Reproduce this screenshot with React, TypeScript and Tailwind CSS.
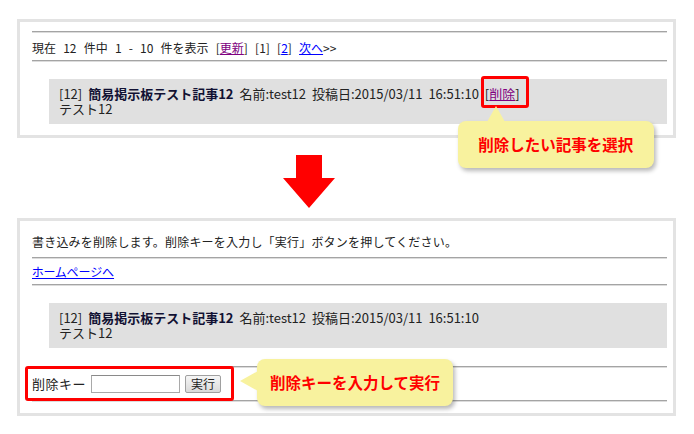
import React from 'react';

const Rule = () => (
  <div className="border-t border-b border-t-[#a4a4a4] border-b-[#dcdcdc]" />
);

const Callout = ({
  children,
  className,
  pointer,
}: {
  children: React.ReactNode;
  className?: string;
  pointer: 'up' | 'left';
}) => (
  <div className={className}>
    <div className="relative w-[196px] h-[47px] rounded-[8px] bg-[#f8f29e] shadow-[2px_3px_4px_rgba(0,0,0,0.28)] flex items-center justify-center">
      {pointer === 'up' ? (
        <svg className="absolute left-[28px] -top-[15px]" width="20" height="16" viewBox="0 0 20 16">
          <polygon points="10,0 19,16 1,16" fill="#f8f29e" />
        </svg>
      ) : (
        <svg className="absolute -left-[17px] top-[11px]" width="18" height="22" viewBox="0 0 18 22">
          <polygon points="0,11 18,1 18,21" fill="#f8f29e" />
        </svg>
      )}
      <span className="relative text-[15.5px] leading-none font-bold text-[#ff0000] whitespace-nowrap">{children}</span>
    </div>
  </div>
);

const PostBox = ({ withDelete }: { withDelete?: boolean }) => (
  <div className="ml-[17px] bg-[#e0e0e0] pl-[10px] pt-[7px] pb-[8px] text-[13px] leading-[15px] text-[#222] [word-spacing:3px]">
    <div className="whitespace-nowrap">
      [12] <span className="font-bold text-[#111133]">簡易掲示板テスト記事12</span> 名前:test12 投稿日:2015/03/11 16:51:10
      {withDelete && (
        <>
          {' '}
          <span className="relative">
            [<a href="#" className="text-[#800080] underline">削除</a>]
            <span className="absolute -left-[4px] -right-[9px] -top-[8px] -bottom-[5px] border-[3px] border-[#ff0000] rounded-[3px]" />
            <Callout className="absolute left-[-27px] top-[37px] [word-spacing:0]" pointer="up">
              削除したい記事を選択
            </Callout>
          </span>
        </>
      )}
    </div>
    <div>テスト12</div>
  </div>
);

export default function App() {
  return (
    <div className="relative w-[694px] h-[434px] bg-white overflow-hidden font-['Noto_Sans_CJK_JP','Noto_Sans',sans-serif] text-[#222]">
      {/* list panel */}
      <div className="ml-[17px] mt-[19px] w-[659px] border-[3px] border-[#e3e3e3] pl-[12px] pr-[6px] pt-[9px] pb-[11px]">
        <Rule />
        <div className="h-[27px] flex items-center pt-[2px] text-[12px] whitespace-nowrap [word-spacing:4.5px]">
          <span>
            現在 12 件中 1 - 10 件を表示 [<a href="#" className="text-[#800080] underline">更新</a>] [1] [<a href="#" className="text-[#0000ff] underline">2</a>] <a href="#" className="text-[#0000ff] underline">次へ</a>&gt;&gt;
          </span>
        </div>
        <Rule />
        <div className="h-[17px]" />
        <PostBox withDelete />
      </div>

      {/* arrow */}
      <svg className="ml-[283px] mt-[17px]" width="52" height="53" viewBox="0 0 52 53">
        <polygon points="13,0 39,0 39,23 52,23 26,53 0,23 13,23" fill="#ff0000" />
      </svg>

      {/* delete form panel */}
      <div className="ml-[17px] mt-[10px] w-[659px] border-[3px] border-[#e3e3e3] pl-[12px] pr-[6px] pb-[11px]">
        <div className="h-[36px] flex items-center pt-[6px] text-[12px] tracking-[0.2px] whitespace-nowrap">
          書き込みを削除します。削除キーを入力し「実行」ボタンを押してください。
        </div>
        <Rule />
        <div className="h-[25px] flex items-center text-[12px] [font-feature-settings:'palt']">
          <a href="#" className="text-[#0000ff] underline">ホームページへ</a>
        </div>
        <Rule />
        <div className="h-[17px]" />
        <PostBox />
        <div className="h-[18px]" />
        <Rule />
        <div className="relative h-[32px] flex items-center text-[13px]">
          <span className="absolute -left-[7px] -top-[2px] w-[209px] h-[35px] border-[3px] border-[#ff0000] rounded-[3px] bg-white" />
          <div className="relative flex items-center">
            <span className="tracking-[0.5px]">削除キー</span>
            <input className="ml-[5px] w-[89px] h-[18px] border border-[#a9a9a9] border-t-[#8a8a8a] bg-white" />
            <button className="ml-[5px] w-[36px] h-[18px] border border-[#a0a0a0] rounded-[2px] bg-gradient-to-b from-[#f6f6f6] to-[#dadada] text-[12px] leading-none">
              実行
            </button>
          </div>
          <Callout className="absolute left-[225px] -top-[9px]" pointer="left">
            削除キーを入力して実行
          </Callout>
        </div>
        <Rule />
      </div>
    </div>
  );
}
